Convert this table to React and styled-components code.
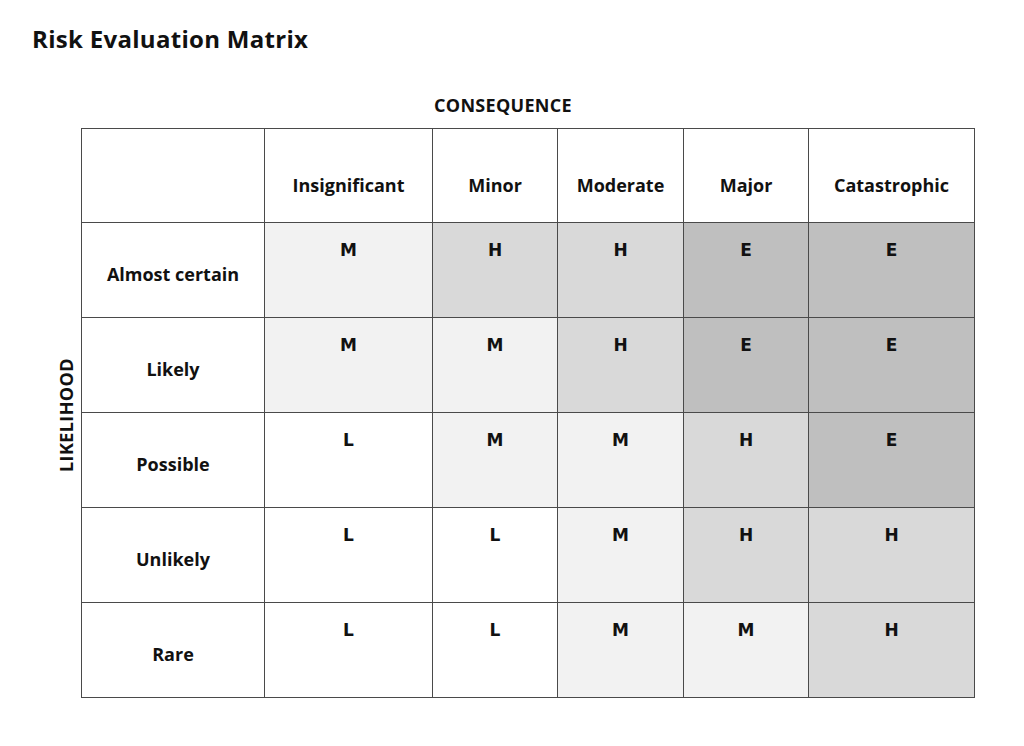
import styled, { createGlobalStyle } from "styled-components";

const GlobalStyle = createGlobalStyle`
  html, body {
    margin: 0;
    padding: 0;
    background: #ffffff;
  }
  body {
    font-family: "Open Sans", "Lato", sans-serif;
    color: #111;
  }
`;

const Page = styled.div`
  width: 1024px;
  height: 746px;
  padding: 24px 0 0 32px;
  box-sizing: border-box;
`;

const Title = styled.h1`
  margin: 0;
  font-size: 24px;
  font-weight: 700;
  line-height: 30px;
  letter-spacing: 0.3px;
`;

const Body = styled.div`
  display: flex;
  margin-top: 40px;
`;

const SideLabel = styled.div`
  width: 49px;
  display: flex;
  align-items: center;
  justify-content: center;
  padding-top: 38px;
`;

const Vertical = styled.span`
  writing-mode: vertical-rl;
  transform: rotate(180deg);
  font-size: 18px;
  font-weight: 700;
  letter-spacing: 0.4px;
  margin-left: 18px;
`;

const MatrixWrap = styled.div`
  display: flex;
  flex-direction: column;
`;

const Caption = styled.div`
  text-align: center;
  padding-right: 50px;
  font-size: 18px;
  font-weight: 700;
  letter-spacing: 0.3px;
  height: 34px;
  line-height: 22px;
`;

const Table = styled.table`
  border-collapse: collapse;
  table-layout: fixed;
  width: 893px;
`;

const Col = styled.col`
  width: ${({ $w }) => $w}px;
`;

const HeadCell = styled.th`
  height: 94px;
  border: 1px solid #4a4a4a;
  font-size: 18px;
  font-weight: 700;
  text-align: center;
  vertical-align: middle;
  padding: 18px 0 0;
  box-sizing: border-box;
  background: #fff;
`;

const RowLabel = styled.th`
  height: 95px;
  border: 1px solid #4a4a4a;
  font-size: 18px;
  font-weight: 700;
  text-align: center;
  vertical-align: middle;
  padding: 8px 0 0;
  box-sizing: border-box;
  background: #fff;
`;

const shades = {
  L: "#ffffff",
  M: "#f2f2f2",
  H: "#d9d9d9",
  E: "#bfbfbf",
};

const RiskCell = styled.td`
  height: 95px;
  border: 1px solid #4a4a4a;
  background: ${({ $level }) => shades[$level]};
  font-family: "DejaVu Sans", "Verdana", sans-serif;
  font-size: 17px;
  font-weight: 700;
  text-align: center;
  vertical-align: top;
  padding: 17px 0 0;
  box-sizing: border-box;
`;

const widths = [183, 168, 125, 126, 125, 166];
const consequences = ["Insignificant", "Minor", "Moderate", "Major", "Catastrophic"];

const rows = [
  { label: "Almost certain", values: ["M", "H", "H", "E", "E"] },
  { label: "Likely", values: ["M", "M", "H", "E", "E"] },
  { label: "Possible", values: ["L", "M", "M", "H", "E"] },
  { label: "Unlikely", values: ["L", "L", "M", "H", "H"] },
  { label: "Rare", values: ["L", "L", "M", "M", "H"] },
];

export default function App() {
  return (
    <>
      <GlobalStyle />
      <Page>
        <Title>Risk Evaluation Matrix</Title>
        <Body>
          <SideLabel>
            <Vertical>LIKELIHOOD</Vertical>
          </SideLabel>
          <MatrixWrap>
            <Caption>CONSEQUENCE</Caption>
            <Table>
              <colgroup>
                {widths.map((w, i) => (
                  <Col key={i} $w={w} />
                ))}
              </colgroup>
              <thead>
                <tr>
                  <HeadCell />
                  {consequences.map((c) => (
                    <HeadCell key={c}>{c}</HeadCell>
                  ))}
                </tr>
              </thead>
              <tbody>
                {rows.map((r) => (
                  <tr key={r.label}>
                    <RowLabel>{r.label}</RowLabel>
                    {r.values.map((v, i) => (
                      <RiskCell key={i} $level={v}>
                        {v}
                      </RiskCell>
                    ))}
                  </tr>
                ))}
              </tbody>
            </Table>
          </MatrixWrap>
        </Body>
      </Page>
    </>
  );
}
